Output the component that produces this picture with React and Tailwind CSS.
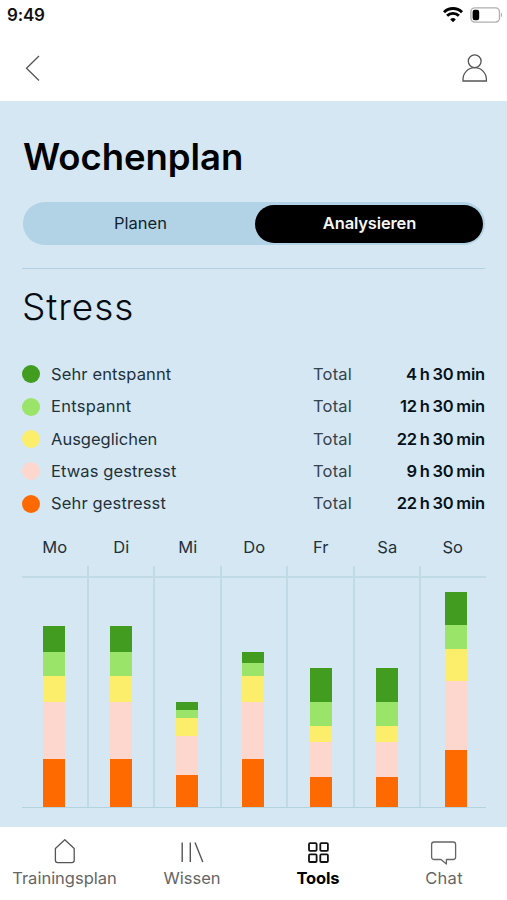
const LEGEND = [
  { label: "Sehr entspannt", total: "4 h 30 min", dot: "bg-[#429c20]", text: "tracking-[0.13px]" },
  { label: "Entspannt", total: "12 h 30 min", dot: "bg-[#9ae469]", text: "tracking-[0.26px]" },
  { label: "Ausgeglichen", total: "22 h 30 min", dot: "bg-[#fcee6b]", text: "tracking-[0px]" },
  { label: "Etwas gestresst", total: "9 h 30 min", dot: "bg-[#fdd7cd]", text: "tracking-[0.1px]" },
  { label: "Sehr gestresst", total: "22 h 30 min", dot: "bg-[#ff6a00]", text: "tracking-[0.14px]" },
];

// segment heights in px, from most relaxed (top) to most stressed (bottom)
const DAYS = [
  { name: "Mo", inset: "pl-[21px]", bar: [26, 24, 26, 57, 48] },
  { name: "Di", inset: "pl-[21.5px]", bar: [26, 24, 26, 57, 48] },
  { name: "Mi", inset: "pl-[21px]", bar: [8, 8, 18, 39, 32] },
  { name: "Do", inset: "pl-[20.5px]", bar: [11.5, 12.5, 26, 57, 48] },
  { name: "Fr", inset: "pl-[22px]", bar: [34, 24, 16, 35.5, 29.5] },
  { name: "Sa", inset: "pl-[21.5px]", bar: [34, 24, 16, 35.5, 29.5] },
  { name: "So", inset: "pl-[24px]", bar: [33, 24, 32, 69, 57] },
];

function StatusBar() {
  return (
    <div className="flex h-[30px] items-center justify-between pr-[4px] pl-[7px]">
      <span className="text-[17px] leading-none font-semibold tracking-[-0.2px] text-[#111]">9:49</span>
      <div className="flex items-center gap-[7px]">
        <svg width="20" height="16" viewBox="0 0 20 16" fill="none" stroke="#000" strokeWidth="2.9">
          <path d="M1 5.2 A12.8 12.8 0 0 1 19 5.2" />
          <path d="M4.1 8.8 A8.4 8.4 0 0 1 15.9 8.8" />
          <path d="M10 15.2 L7.2 12.4 A4 4 0 0 1 12.8 12.4 Z" fill="#000" stroke="none" />
        </svg>
        <svg width="33" height="16" viewBox="0 0 33 16">
          <rect x="0.9" y="0.9" width="28.6" height="14.2" rx="4" fill="#fff" stroke="#b0b0b0" strokeWidth="1.4" />
          <rect x="2.6" y="2.8" width="6.6" height="10.4" rx="2.2" fill="#000" />
          <path d="M31 5.6 Q33 8 31 10.4 Z" fill="#a5a5a5" />
        </svg>
      </div>
    </div>
  );
}

function TopBar() {
  return (
    <div className="flex h-[71px] items-center justify-between pt-[4px] pr-[18px] pl-[24px]">
      <svg width="17" height="28" viewBox="0 0 17 28" fill="none" stroke="#555" strokeWidth="1.3">
        <path d="M15 2 L2.5 14.2 L15 26.5" />
      </svg>
      <svg width="28" height="30" viewBox="0 0 28 30" fill="none" stroke="#555" strokeWidth="1.3">
        <circle cx="13.7" cy="8.3" r="6.4" />
        <path d="M2 28 V26.5 C2 20 7.2 14.7 13.7 14.7 C20.2 14.7 25.4 20 25.4 26.5 V28 Z" />
      </svg>
    </div>
  );
}

function Segmented() {
  return (
    <div className="mt-[23px] ml-[1px] flex h-[43px] items-center rounded-full bg-[#b1d3e5] pr-[2px] text-[16.5px]">
      <button className="w-[232px] pl-[3px] text-[#122330]">Planen</button>
      <button className="h-[38px] w-[228px] rounded-full bg-black pl-[1px] font-semibold tracking-[-0.15px] text-[#f5f5f5]">
        Analysieren
      </button>
    </div>
  );
}

function Legend() {
  return (
    <ul className="mt-[29px] text-[16.5px]">
      {LEGEND.map((row) => (
        <li key={row.label} className="flex h-[32.4px] items-center">
          <span className={`size-[18px] rounded-full ${row.dot}`} />
          <span className={`ml-[11px] w-[262px] text-[#22323c] ${row.text}`}>{row.label}</span>
          <span className="tracking-[0.2px] text-[#34444e]">Total</span>
          <span className="ml-auto font-semibold tracking-[-0.2px] [word-spacing:-1.1px] text-[#06121b]">{row.total}</span>
        </li>
      ))}
    </ul>
  );
}

function Chart() {
  return (
    <div className="-mr-[0.5px]">
      <div className="mt-[15px] grid h-[24px] grid-cols-[repeat(6,66.5px)_1fr] items-center text-[16.5px] text-[#22323c]">
        {DAYS.map((day) => (
          <span key={day.name} className="pr-[1px] text-center">{day.name}</span>
        ))}
      </div>
      <div className="mt-[7px] grid h-[242px] grid-cols-[repeat(6,66.5px)_1fr] border-b border-[#b3d3de]">
        {DAYS.map((day) => (
          <div key={day.name} className="flex flex-col border-r-2 border-[#c0dbe5] pt-[10px] last:border-r-0">
            <div className={`flex flex-1 flex-col justify-end border-t-2 border-[#c0dbe5] ${day.inset}`}>
              {day.bar.map((height, i) => (
                <div key={i} className={`w-[22px] ${LEGEND[i].dot}`} style={{ height }} />
              ))}
            </div>
          </div>
        ))}
      </div>
    </div>
  );
}

function TabBar() {
  return (
    <nav className="flex h-[73px] bg-white pt-[9px] text-[16.5px] text-[#666]">
      <div className="flex w-[129px] flex-col items-center">
        <svg width="32" height="32" viewBox="0 0 32 32" fill="none" stroke="#555" strokeWidth="1.3" strokeLinejoin="round">
          <path d="M6.4 12.5 L15.8 3.7 L25.2 12.5 V24.3 Q25.2 26.6 22.9 26.6 H8.7 Q6.4 26.6 6.4 24.3 Z" />
        </svg>
        <span className="leading-[20px]">Trainingsplan</span>
      </div>
      <div className="flex w-[126px] flex-col items-center">
        <svg width="32" height="32" viewBox="0 0 32 32" fill="none" stroke="#555" strokeWidth="1.4">
          <path d="M6.2 6.5 V26 M14.3 6.5 V26 M19 6.5 L26.8 26" />
        </svg>
        <span className="leading-[20px]">Wissen</span>
      </div>
      <div className="flex w-[125px] flex-col items-center text-black">
        <svg width="32" height="32" viewBox="0 0 32 32" fill="none" stroke="#111" strokeWidth="1.8">
          <rect x="7" y="7.2" width="7.6" height="7.6" rx="1" />
          <rect x="18.3" y="7.2" width="7.6" height="7.6" rx="1" />
          <rect x="7" y="18.4" width="7.6" height="7.6" rx="1" />
          <rect x="18.3" y="18.4" width="7.6" height="7.6" rx="1" />
        </svg>
        <span className="pl-[1px] leading-[20px] font-bold tracking-[-0.15px]">Tools</span>
      </div>
      <div className="flex w-[127px] flex-col items-center">
        <svg width="32" height="32" viewBox="0 0 32 32" fill="none" stroke="#666" strokeWidth="1.3" strokeLinejoin="round">
          <path d="M6 6 H25.2 Q27.6 6 27.6 8.4 V21 Q27.6 23.5 25.2 23.5 H18.4 V28 L13 23.5 H6 Q3.6 23.5 3.6 21 V8.4 Q3.6 6 6 6 Z" />
        </svg>
        <span className="pl-[1px] leading-[20px] tracking-[0.3px]">Chat</span>
      </div>
    </nav>
  );
}

export default function App() {
  return (
    <div className="flex h-[900px] w-[507px] flex-col overflow-hidden bg-white font-['Inter',sans-serif]">
      <header className="h-[101px]">
        <StatusBar />
        <TopBar />
      </header>
      <main className="flex-1 bg-[#d5e7f2] pr-[22px] pl-[22px]">
        <h1 className="pt-[34px] pl-[1px] text-[36.5px] leading-[44px] font-semibold tracking-[-0.05px] text-black">Wochenplan</h1>
        <Segmented />
        <div className="mt-[23px] border-b border-[#b3d0dc]" />
        <h2 className="mt-[16px] text-[37px] leading-[44px] font-[340] tracking-[0.9px] text-[#060c12]">Stress</h2>
        <Legend />
        <Chart />
      </main>
      <TabBar />
    </div>
  );
}
